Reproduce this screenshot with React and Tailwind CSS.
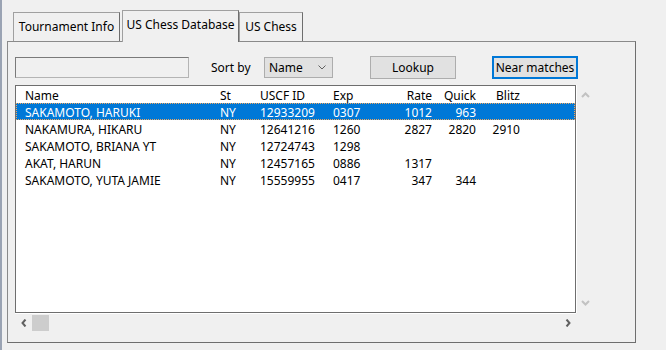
import React from "react";

const rows = [
  ["SAKAMOTO, HARUKI", "NY", "12933209", "0307", "1012", "963", ""],
  ["NAKAMURA, HIKARU", "NY", "12641216", "1260", "2827", "2820", "2910"],
  ["SAKAMOTO, BRIANA YT", "NY", "12724743", "1298", "", "", ""],
  ["AKAT, HARUN", "NY", "12457165", "0886", "1317", "", ""],
  ["SAKAMOTO, YUTA JAMIE", "NY", "15559955", "0417", "347", "344", ""],
];

function Row({ cells, header, selected }) {
  return (
    <div
      className={
        "grid grid-cols-[195px_40px_73px_40px_59px_44px_44px] h-[17px] items-center pl-[8px] leading-[17px] " +
        (selected ? "bg-[#0078d7] text-white border border-dotted border-[#f0a860] pl-[8px]" : "border border-transparent")
      }
    >
      <span>{cells[0]}</span>
      <span>{cells[1]}</span>
      <span>{cells[2]}</span>
      <span>{cells[3]}</span>
      <span className="text-right">{cells[4]}</span>
      <span className="text-right">{cells[5]}</span>
      <span className="text-right">{cells[6]}</span>
    </div>
  );
}

export default function App() {
  return (
    <div className="w-[666px] h-[350px] bg-[#f0f0f0] flex font-['Noto_Sans',sans-serif] text-[12px] text-black overflow-hidden">
      <div className="w-[2px] h-full bg-[#9aa3b3]" />
      <div className="flex flex-col pl-[5px] pt-[10px]">
        {/* Tabs */}
        <div className="flex items-end h-[31px]">
          <div className="ml-[6px] w-[107px] h-[29px] border-t border-l border-[#a0a0a0] border-r border-r-[#6e6e6e] flex items-center justify-center pb-[1px]">
            Tournament Info
          </div>
          <div className="relative z-10 ml-[2px] w-[117px] h-[32px] mb-[-1px] bg-[#f0f0f0] border-t border-l border-[#a0a0a0] border-r border-r-[#6e6e6e] flex items-start justify-center pt-[5px]">
            US Chess Database
          </div>
          <div className="w-[64px] h-[29px] border-t border-l border-[#a0a0a0] border-r border-r-[#6e6e6e] flex items-center justify-center pb-[1px]">
            US Chess
          </div>
        </div>
        {/* Panel */}
        <div className="w-[629px] h-[302px] border border-[#8a8a8a] border-r-[#6e6e6e] border-b-[#6e6e6e] pt-[14px] pl-[7px]">
          <div className="flex items-center h-[23px]">
            <div className="w-[174px] h-[21px] bg-[#f0f0f0] border border-[#7a7a7a] border-r-[#b4b4b4] border-b-[#b4b4b4]" />
            <span className="ml-[22px] w-[53px]">Sort by</span>
            <div className="w-[69px] h-[21px] bg-[#e1e1e1] border border-[#adadad] flex items-center justify-between pl-[4px] pr-[6px]">
              <span>Name</span>
              <svg width="8" height="5" viewBox="0 0 8 5">
                <path d="M0.5 0.5 L4 4 L7.5 0.5" fill="none" stroke="#606060" strokeWidth="1" />
              </svg>
            </div>
            <div className="ml-[37px] w-[86px] h-[23px] bg-[#e1e1e1] border border-[#adadad] flex items-center justify-center">
              Lookup
            </div>
            <div className="ml-[36px] w-[86px] h-[23px] bg-[#e1e1e1] border-2 border-[#0078d7] flex items-center justify-center">
              Near matches
            </div>
          </div>
          {/* List area */}
          <div className="mt-[6px] flex">
            <div className="flex flex-col">
              <div className="w-[561px] h-[228px] bg-white border border-[#6e6e6e]">
                <Row cells={["Name", "St", "USCF ID", "Exp", "Rate", "Quick", "Blitz"]} header />
                {rows.map((r, i) => (
                  <Row key={i} cells={r} selected={i === 0} />
                ))}
              </div>
              <div className="h-[18px] flex items-center border-t border-white">
                <div className="w-[16px] flex justify-center ml-[1px]">
                  <svg width="6" height="8" viewBox="0 0 6 8">
                    <path d="M4.5 0.5 L1.5 4 L4.5 7.5" fill="none" stroke="#606060" strokeWidth="2" />
                  </svg>
                </div>
                <div className="w-[17px] h-[16px] bg-[#cdcdcd]" />
                <div className="flex-1" />
                <div className="w-[16px] flex justify-center mr-[0px]">
                  <svg width="6" height="8" viewBox="0 0 6 8">
                    <path d="M1.5 0.5 L4.5 4 L1.5 7.5" fill="none" stroke="#606060" strokeWidth="2" />
                  </svg>
                </div>
              </div>
            </div>
            <div className="w-[18px] h-[228px] flex flex-col items-center justify-between py-[7px] border-l border-white">
              <svg width="9" height="6" viewBox="0 0 9 6">
                <path d="M1 5 L4.5 1.5 L8 5" fill="none" stroke="#c2c2c2" strokeWidth="2" />
              </svg>
              <svg width="9" height="6" viewBox="0 0 9 6">
                <path d="M1 1 L4.5 4.5 L8 1" fill="none" stroke="#c2c2c2" strokeWidth="2" />
              </svg>
            </div>
          </div>
        </div>
      </div>
    </div>
  );
}
